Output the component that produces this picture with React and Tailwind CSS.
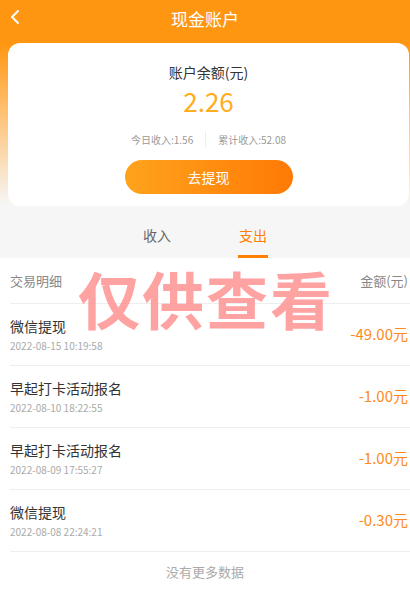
import React, { useState } from "react";

const records = [
  { title: "微信提现", time: "2022-08-15 10:19:58", amount: "-49.00元" },
  { title: "早起打卡活动报名", time: "2022-08-10 18:22:55", amount: "-1.00元" },
  { title: "早起打卡活动报名", time: "2022-08-09 17:55:27", amount: "-1.00元" },
  { title: "微信提现", time: "2022-08-08 22:24:21", amount: "-0.30元" },
];

const font = { fontFamily: '"Noto Sans CJK SC", "Noto Sans", sans-serif' };

const App = () => {
  const [tab, setTab] = useState("out");

  return (
    <div className="relative min-h-[600px] w-[410px] overflow-hidden bg-white" style={font}>

      {/* ---------- top ---------- */}
      <div className="bg-[linear-gradient(to_bottom,#ff9612_0px,#ff9612_44px,#ffc070_110px,#f6f6f6_205px)]">

        <div className="relative flex h-[38px] items-center justify-center">
          <svg className="absolute left-[9px] top-[9px]" width="12" height="16" viewBox="0 0 12 16" fill="none">
            <path d="M9 2 L3 8 L9 14" stroke="white" strokeWidth="2" strokeLinecap="round" strokeLinejoin="round" />
          </svg>
          <span className="text-[17px] text-white">现金账户</span>
        </div>

        <div className="ml-2 mr-[1px] mt-[5px] flex flex-col items-center rounded-xl bg-white pb-[12px] pt-[19px]">
          <div className="text-[14px] leading-5 text-[#333]">账户余额(元)</div>
          <div className="mt-[3px] text-[26px] leading-8 text-[#ffad1f]">2.26</div>
          <div className="mt-[14px] flex items-center text-[10px] text-[#999]">
            <span className="pr-[12px]">今日收入:1.56</span>
            <span className="h-[16px] w-px bg-[#eee]" />
            <span className="pl-[12px]">累计收入:52.08</span>
          </div>
          <button className="mt-[13px] flex h-[34px] w-[168px] items-center justify-center rounded-full bg-[linear-gradient(to_right,#ffa31c,#ff7a05)] text-[14px] text-white">
            去提现
          </button>
        </div>

        {/* ---------- tabs ---------- */}
        <div className="flex h-[52px] items-end justify-center gap-[66px] bg-[#f6f6f6]">
          <button
            onClick={() => setTab("in")}
            className={`flex h-full flex-col items-center justify-end text-[14px] ${tab === "in" ? "text-[#ff7f00]" : "text-[#666]"}`}
          >
            <span className="mb-[9px]">收入</span>
            <span className={`h-[3px] w-[30px] ${tab === "in" ? "bg-[#ff7f00]" : "bg-transparent"}`} />
          </button>
          <button
            onClick={() => setTab("out")}
            className={`flex h-full flex-col items-center justify-end text-[14px] ${tab === "out" ? "text-[#ff7f00]" : "text-[#666]"}`}
          >
            <span className="mb-[9px]">支出</span>
            <span className={`h-[3px] w-[30px] ${tab === "out" ? "bg-[#ff7f00]" : "bg-transparent"}`} />
          </button>
        </div>
      </div>

      {/* ---------- list ---------- */}
      <div className="bg-white pl-[10px]">
        <div className="flex h-[46px] items-center justify-between border-b border-[#eee] text-[13px] text-[#888]">
          <span>交易明细</span>
          <span className="pr-[2px]">金额(元)</span>
        </div>

        {records.map((r, i) => (
          <div key={i} className="flex h-[62px] items-center justify-between border-b border-[#eee] pr-[2px]">
            <div className="flex flex-col">
              <span className="text-[14px] leading-5 text-[#333]">{r.title}</span>
              <span className="mt-[2px] text-[10px] leading-4 text-[#aaa]">{r.time}</span>
            </div>
            <span className="text-[15px] text-[#ff8a1c]">{r.amount}</span>
          </div>
        ))}

        <div className="flex h-[40px] items-center justify-center pr-[10px] text-[13px] text-[#aaa]">
          没有更多数据
        </div>
      </div>

      {/* watermark */}
      <div className="pointer-events-none absolute left-[78px] top-[263px] text-[62px] font-bold leading-[70px] tracking-[2px] text-[#ff8c8c] opacity-80">
        仅供查看
      </div>
    </div>
  );
};

export default App;
